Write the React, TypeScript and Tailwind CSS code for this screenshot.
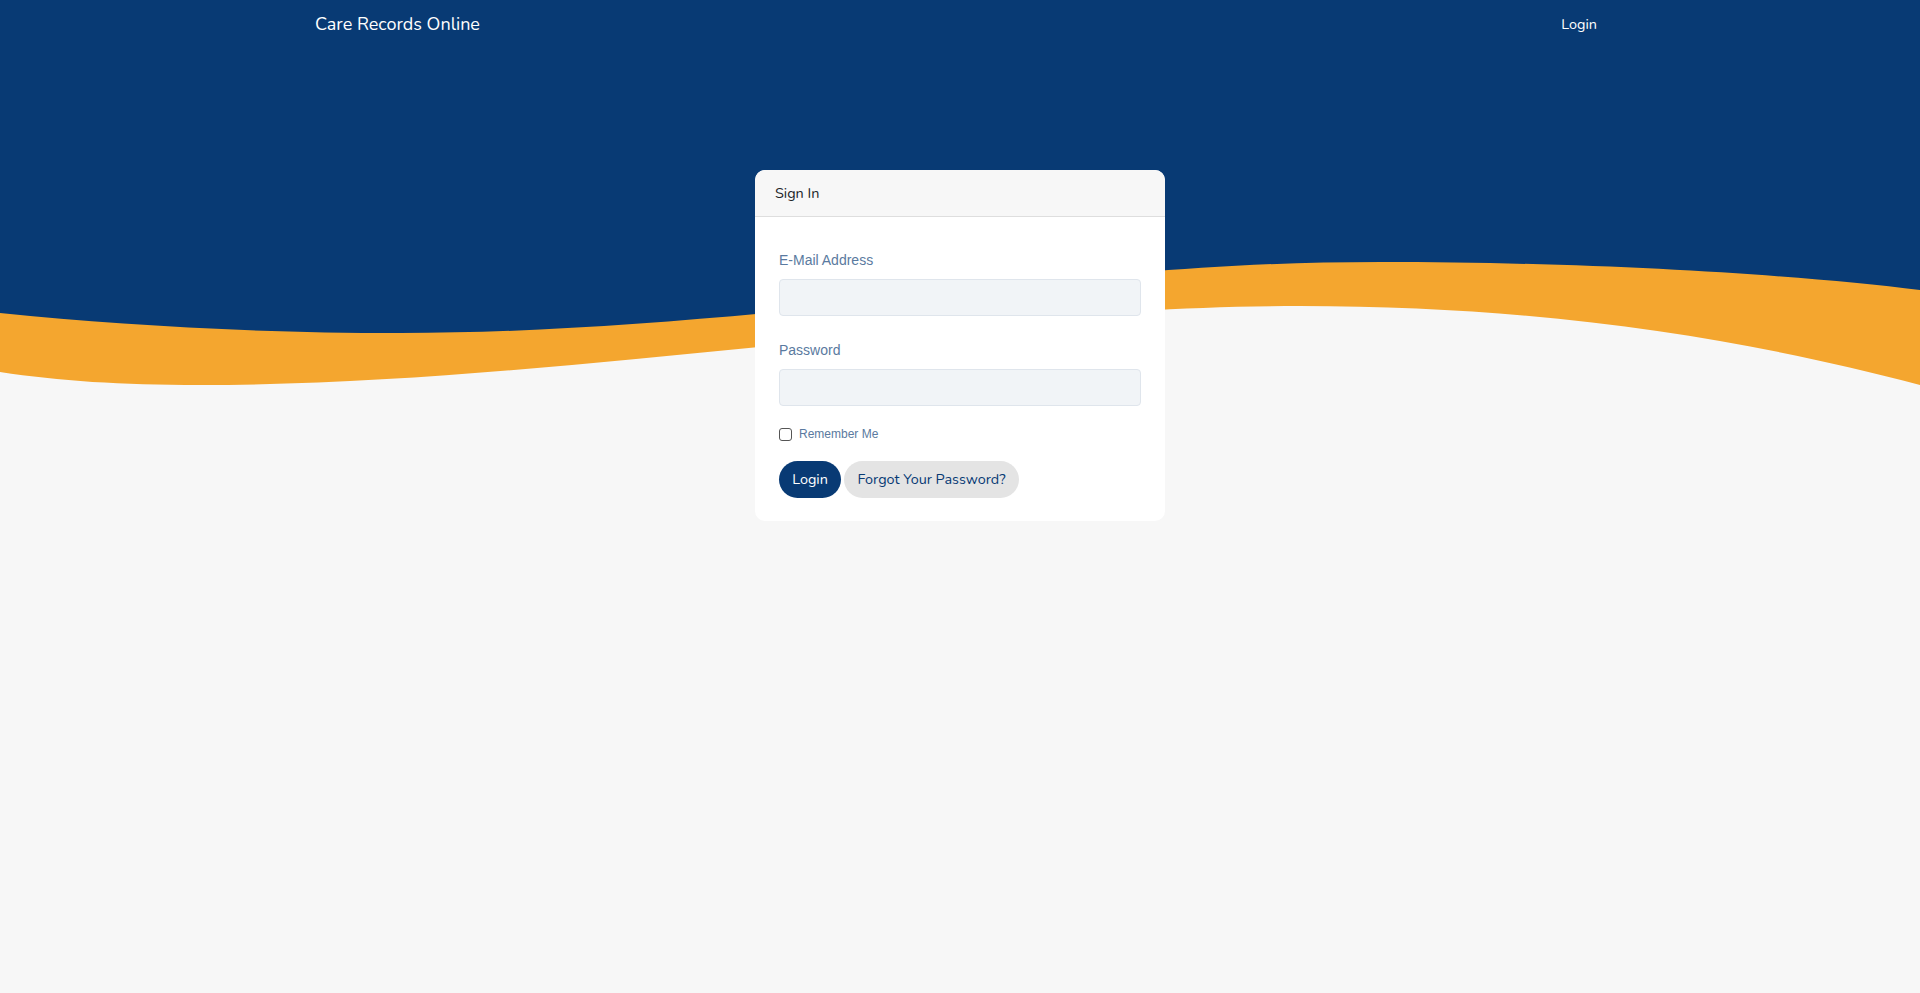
export default function App() {
  return (
    <div className="relative min-h-screen overflow-hidden bg-[#f7f7f7] font-['Nunito','Lato',sans-serif]">
      {/* background waves */}
      <svg
        className="pointer-events-none absolute left-0 top-0 h-[993px] w-full"
        viewBox="0 0 1920 993"
        preserveAspectRatio="none"
      >
        <path
          d="M0,0 H1920 V385 C1750,340 1550,306 1300,306 C1100,306 950,329 800,343 C600,362 400,385 200,385 C120,385 60,381 0,372 Z"
          fill="#f4a62f"
        />
        <path
          d="M0,0 H1920 V290 C1800,275 1600,262 1380,262 C1150,262 1000,290 850,305 C700,320 550,333 400,333 C250,333 120,325 0,313 Z"
          fill="#083a74"
        />
      </svg>

      <nav className="relative">
        <div className="mx-auto flex h-[49px] max-w-[1320px] items-center justify-between px-[15px]">
          <span className="text-[18px] text-white">Care Records Online</span>
          <a href="#" className="px-2 text-[14.4px] text-white">
            Login
          </a>
        </div>
      </nav>

      <main className="relative pt-[121px]">
        <div className="mx-auto w-[410px] overflow-hidden rounded-[10px] bg-white">
          <div className="flex h-[47px] items-center border-b border-[#dedede] bg-[#f7f7f7] px-5 pt-[1px] text-[14.4px] text-[#212529]">
            Sign In
          </div>
          <div className="px-6 pb-[23px] pt-[33px] font-['Liberation_Sans','Arial',sans-serif]">
            <label className="block text-[14px] leading-[20px] text-[#5a7aa0]">
              E-Mail Address
            </label>
            <input
              type="email"
              className="mt-[9px] block h-[37px] w-full rounded-[4px] border border-[#dfe5ec] bg-[#f1f4f7] px-3 outline-none"
            />
            <label className="mt-[24px] block text-[14px] leading-[20px] text-[#5a7aa0]">
              Password
            </label>
            <input
              type="password"
              className="mt-[9px] block h-[37px] w-full rounded-[4px] border border-[#dfe5ec] bg-[#f1f4f7] px-3 outline-none"
            />
            <div className="mt-[18px] flex h-[20px] items-center gap-[7px]">
              <input
                type="checkbox"
                className="h-[13px] w-[13px] appearance-none rounded-[3px] border border-[#555] bg-white"
              />
              <span className="text-[12px] text-[#5a7aa0]">Remember Me</span>
            </div>
            <div className="mt-[17px] flex gap-[3px] font-['Nunito','Lato',sans-serif]">
              <button className="h-[37px] w-[62px] rounded-full bg-[#083a74] text-[14.4px] text-white">
                Login
              </button>
              <button className="h-[37px] w-[175px] rounded-full bg-[#e4e4e4] text-[14.4px] text-[#083a74]">
                Forgot Your Password?
              </button>
            </div>
          </div>
        </div>
      </main>
    </div>
  );
}
